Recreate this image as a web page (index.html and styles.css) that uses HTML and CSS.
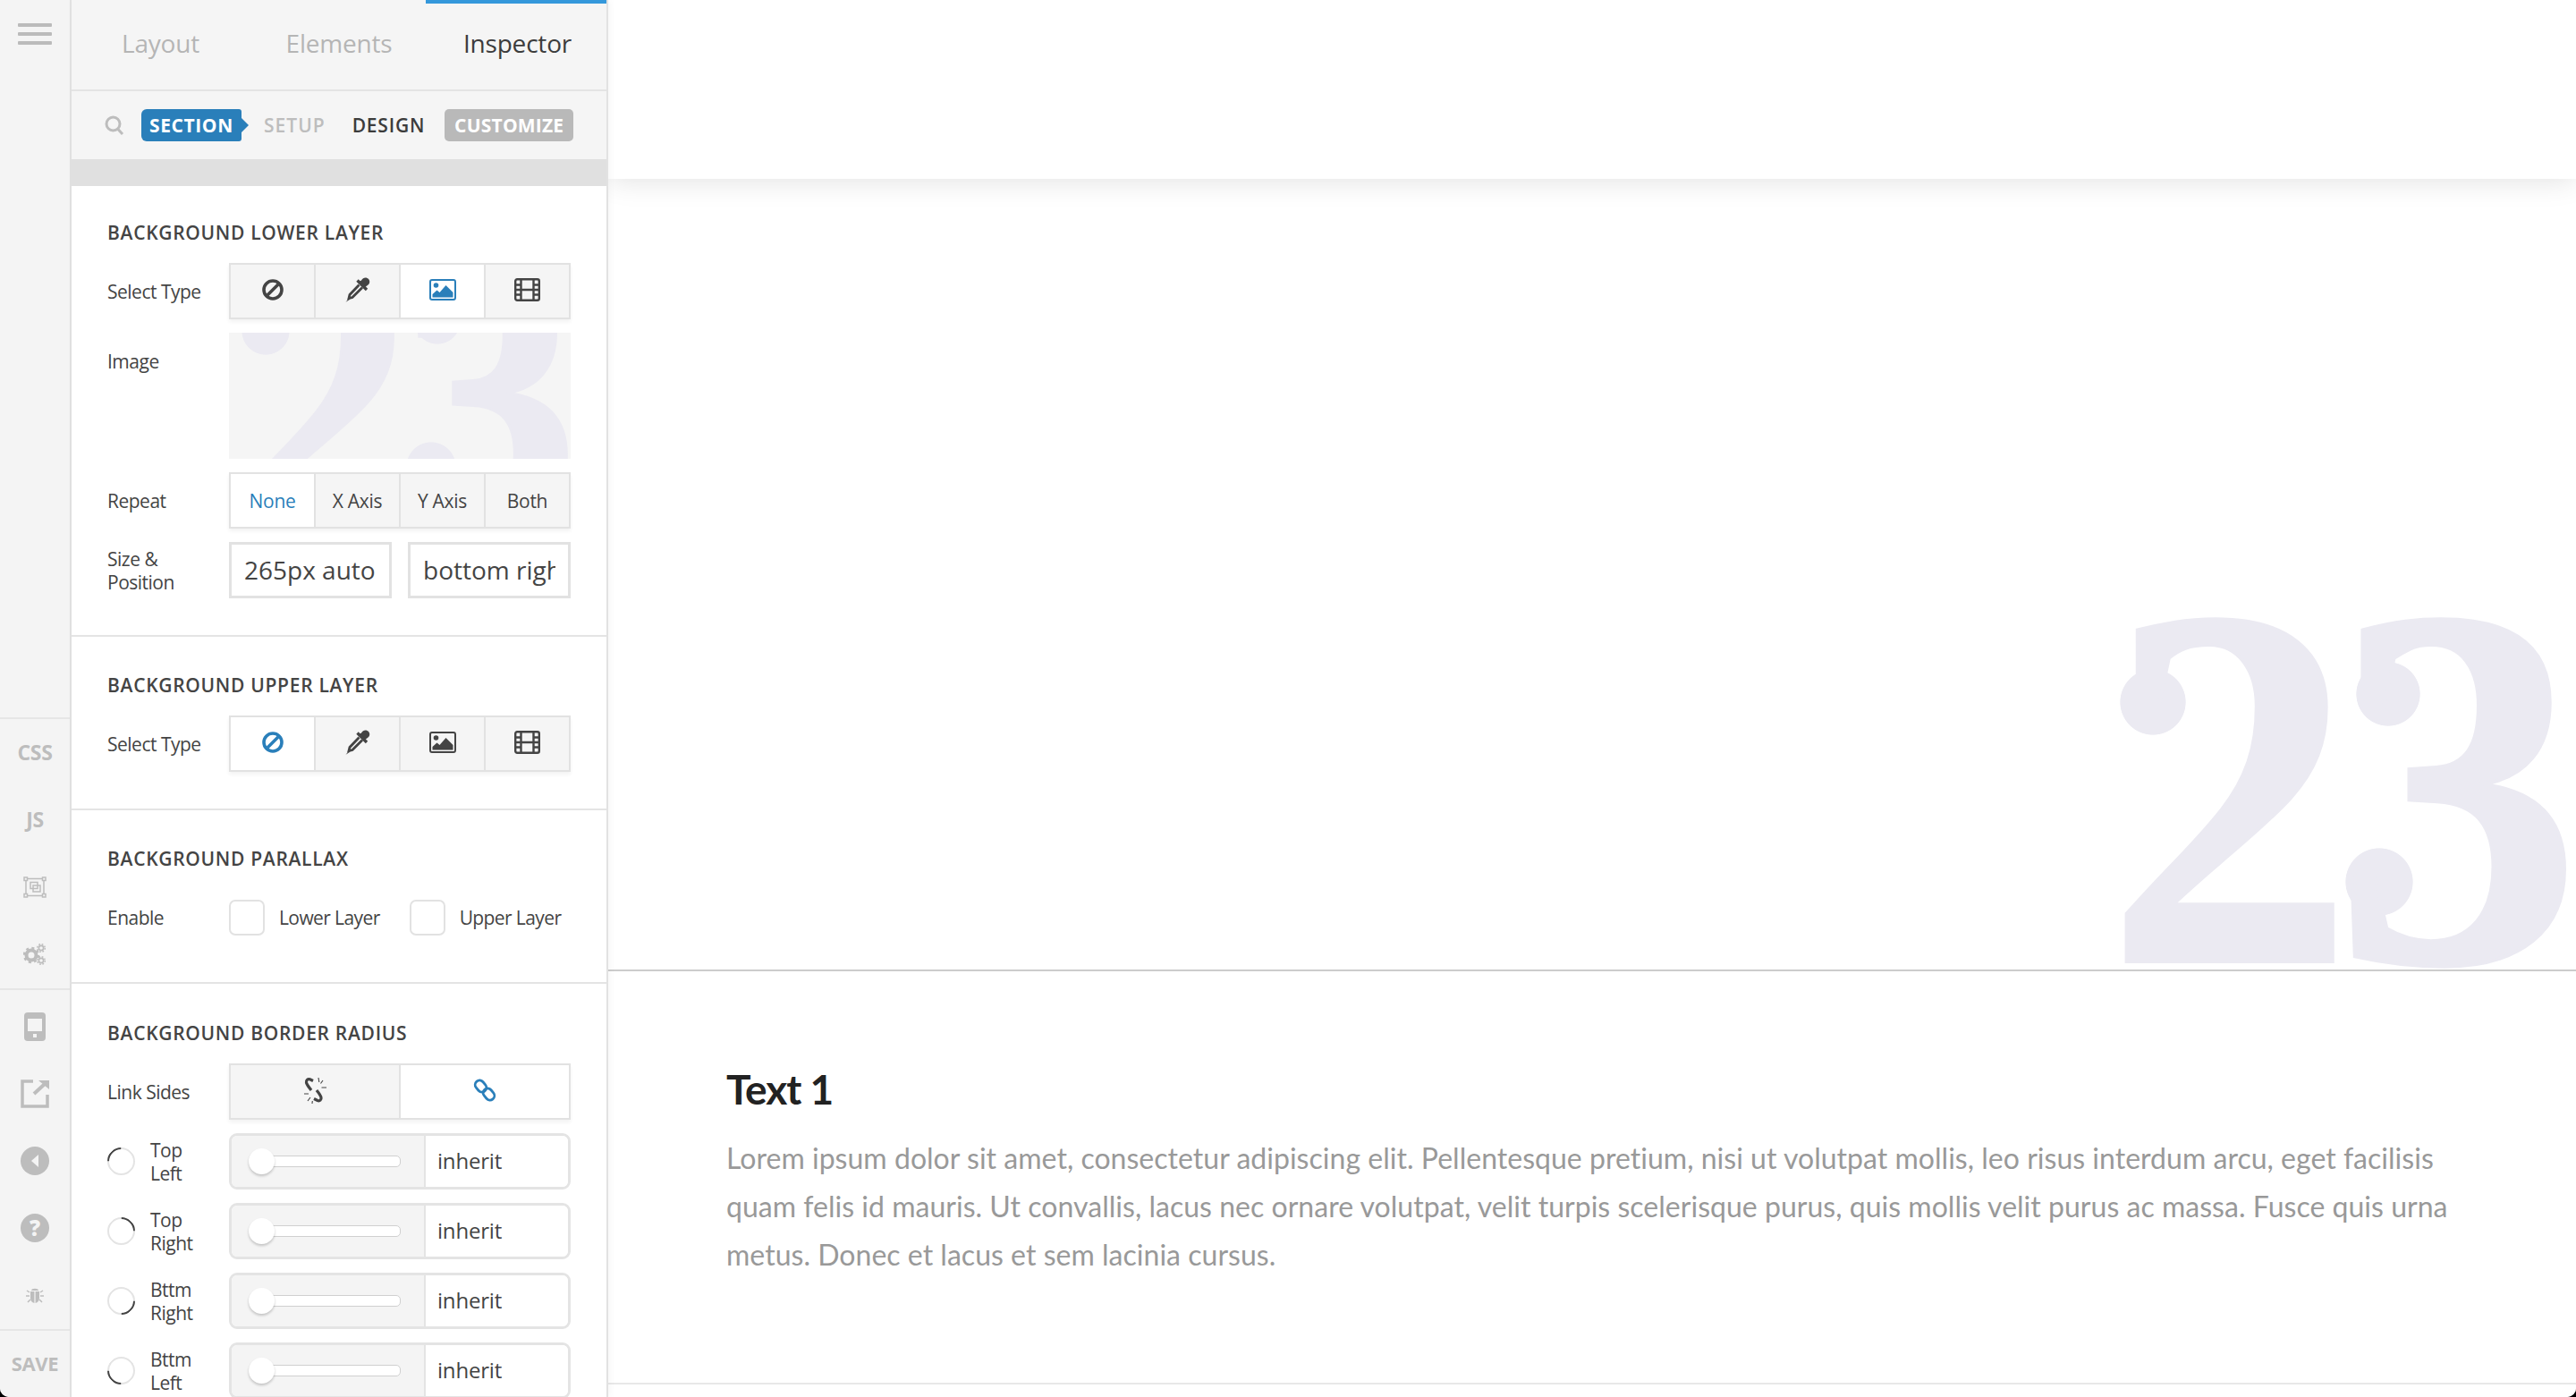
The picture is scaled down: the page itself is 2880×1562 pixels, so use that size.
FILE: index.html
```html
<!DOCTYPE html>
<html lang="en">
<head>
<meta charset="utf-8">
<title>Inspector</title>
<link rel="stylesheet" href="styles.css">
</head>
<body>
<svg class="defs" width="0" height="0" aria-hidden="true">
  <symbol id="i-ban" viewBox="0 0 24 24"><circle cx="12" cy="12" r="10" fill="none" stroke="currentColor" stroke-width="3.6"/><path d="M6 18 18 6" stroke="currentColor" stroke-width="3.6"/></symbol>
  <symbol id="i-drop" viewBox="0 0 28 28"><path d="M18 3.500c1.500-2.500 4-3.500 6.500-2.500 3 1.300 3.500 4.800 1.800 6.800-.8 1-1.800 1.700-2.800 2.200l-1.800 1.800-6.500-6.500z" fill="currentColor"/><path d="M13.500 3.500 24 14" stroke="currentColor" stroke-width="3.400"/><path d="M15.500 8.500 5 19.500l-1 4 4-1L19 11.500" fill="none" stroke="currentColor" stroke-width="2.800"/><path d="M4 23.500 .6 27.800l4.700-3z" fill="currentColor"/></symbol>
  <symbol id="i-img" viewBox="0 0 30 24"><rect x="1" y="1" width="28" height="22" rx="2" fill="none" stroke="currentColor" stroke-width="2"/><circle cx="7.500" cy="7" r="2.800" fill="currentColor"/><path d="M3.500 20.500V17l5-4.500 3 2.500 7-8 8 8v5.500z" fill="currentColor"/></symbol>
  <symbol id="i-film" viewBox="0 0 29 26"><rect x="1.200" y="1.200" width="26.600" height="23.600" rx="2" fill="none" stroke="currentColor" stroke-width="2.400"/><path d="M7.500 1v24M21.500 1v24M7.500 13h14M1 7.500h6.500M1 13h6.500M1 18.500h6.500M21.500 7.500H28M21.500 13H28M21.500 18.500H28" stroke="currentColor" stroke-width="2.400" fill="none"/></symbol>
</svg>

<div class="app">
  <nav class="rail">
    <div class="rail-top">
      <div class="burger"><i></i><i></i><i></i></div>
    </div>
    <div class="rail-group rail-langs">
      <div class="rail-item rail-text">CSS</div>
      <div class="rail-item rail-text">JS</div>
      <div class="rail-item">
        <svg width="26" height="24" viewBox="0 0 26 24" fill="none" stroke="#bdbdbd" stroke-width="1.500"><rect x="3" y="2.500" width="20" height="19"/><rect x="1" y="1" width="3.500" height="3.500" fill="#f4f4f4"/><rect x="21.500" y="1" width="3.500" height="3.500" fill="#f4f4f4"/><rect x="1" y="19.500" width="3.500" height="3.500" fill="#f4f4f4"/><rect x="21.500" y="19.500" width="3.500" height="3.500" fill="#f4f4f4"/><rect x="8" y="6.500" width="8" height="7"/><rect x="11" y="10" width="8" height="7"/></svg>
      </div>
      <div class="rail-item">
        <svg width="26" height="24" viewBox="0 0 26 24" fill="none" stroke="#bdbdbd"><circle cx="9" cy="13" r="5.500" stroke-width="4"/><circle cx="9" cy="13" r="8" stroke-width="2.500" stroke-dasharray="3 3.300"/><circle cx="20" cy="5" r="2.600" stroke-width="1.600"/><circle cx="20" cy="5" r="4.300" stroke-width="1.500" stroke-dasharray="1.800 1.600"/><circle cx="20" cy="19" r="2.600" stroke-width="1.600"/><circle cx="20" cy="19" r="4.300" stroke-width="1.500" stroke-dasharray="1.800 1.600"/></svg>
      </div>
    </div>
    <div class="rail-group rail-tools">
      <div class="rail-item">
        <svg width="24" height="32" viewBox="0 0 24 32"><rect width="24" height="32" rx="4" fill="#bdbdbd"/><rect x="4" y="7" width="16" height="14" fill="#f4f4f4"/><rect x="10" y="24" width="4" height="4" fill="#f4f4f4"/></svg>
      </div>
      <div class="rail-item">
        <svg width="32" height="32" viewBox="0 0 32 32" fill="none" stroke="#bdbdbd" stroke-width="3.500"><path d="M14 2H2v28h28V17"/><path d="M15 16 27 5" stroke-width="4"/><path d="M20 1h12v10z" fill="#bdbdbd" stroke="none"/></svg>
      </div>
      <div class="rail-item">
        <svg width="32" height="32" viewBox="0 0 32 32"><circle cx="16" cy="16" r="16" fill="#bdbdbd"/><path d="M20 9v14l-8-7z" fill="#f4f4f4"/></svg>
      </div>
      <div class="rail-item"><span class="help">?</span></div>
      <div class="rail-item">
        <svg width="20" height="20" viewBox="0 0 20 20" fill="#bdbdbd"><path d="M6 5c0-3 8-3 8 0z"/><path d="M5 6h4.400v13C6.500 18.500 5 16 5 13zM10.600 6H15v7c0 3-1.500 5.500-4.400 6z"/><path d="M4 7 1 5M16 7l3-2M4 11H0M16 11h4M5 15l-3 3M15 15l3 3" stroke="#bdbdbd" stroke-width="1.500"/></svg>
      </div>
    </div>
    <div class="rail-save">SAVE</div>
  </nav>

  <aside class="panel">
    <div class="tabs">
      <div class="tab">Layout</div>
      <div class="tab tab-mid">Elements</div>
      <div class="tab tab-active">Inspector</div>
    </div>
    <div class="subnav">
      <svg class="search" width="22" height="22" viewBox="0 0 22 22" fill="none" stroke="#bdbdbd" stroke-width="3"><circle cx="9.500" cy="9.500" r="7.500"/><path d="M14.500 15 20 21"/></svg>
      <span class="crumb crumb-section">SECTION</span>
      <span class="crumb crumb-setup">SETUP</span>
      <span class="crumb crumb-design">DESIGN</span>
      <span class="crumb crumb-custom">CUSTOMIZE</span>
    </div>
    <div class="band"></div>

    <section class="group group-first">
      <h3 class="group-title">BACKGROUND LOWER LAYER</h3>
      <div class="rows">
        <div class="row">
          <div class="label">Select Type</div>
          <div class="seg">
            <div class="cell"><svg class="ic-ban"><use href="#i-ban"/></svg></div>
            <div class="cell"><svg class="ic-drop"><use href="#i-drop"/></svg></div>
            <div class="cell cell-on"><svg class="ic-img"><use href="#i-img"/></svg></div>
            <div class="cell"><svg class="ic-film"><use href="#i-film"/></svg></div>
          </div>
        </div>
        <div class="row row-thumb">
          <div class="label label-top">Image</div>
          <div class="thumb"><span class="thumb-num">23</span></div>
        </div>
        <div class="row">
          <div class="label">Repeat</div>
          <div class="seg">
            <div class="cell cell-on">None</div>
            <div class="cell">X Axis</div>
            <div class="cell">Y Axis</div>
            <div class="cell">Both</div>
          </div>
        </div>
        <div class="row">
          <div class="label">Size &amp;<br>Position</div>
          <div class="fields">
            <div class="field"><span>265px auto</span></div>
            <div class="field"><span>bottom right</span></div>
          </div>
        </div>
      </div>
    </section>

    <section class="group">
      <h3 class="group-title">BACKGROUND UPPER LAYER</h3>
      <div class="rows">
        <div class="row">
          <div class="label">Select Type</div>
          <div class="seg">
            <div class="cell cell-on"><svg class="ic-ban"><use href="#i-ban"/></svg></div>
            <div class="cell"><svg class="ic-drop"><use href="#i-drop"/></svg></div>
            <div class="cell"><svg class="ic-img"><use href="#i-img"/></svg></div>
            <div class="cell"><svg class="ic-film"><use href="#i-film"/></svg></div>
          </div>
        </div>
      </div>
    </section>

    <section class="group">
      <h3 class="group-title">BACKGROUND PARALLAX</h3>
      <div class="rows">
        <div class="row">
          <div class="label">Enable</div>
          <div class="checks">
            <i class="check"></i><span class="check-label check-lower">Lower Layer</span>
            <i class="check"></i><span class="check-label">Upper Layer</span>
          </div>
        </div>
      </div>
    </section>

    <section class="group group-last">
      <h3 class="group-title">BACKGROUND BORDER RADIUS</h3>
      <div class="rows">
        <div class="row">
          <div class="label">Link Sides</div>
          <div class="seg">
            <div class="cell">
              <svg width="28" height="30" viewBox="0 0 28 30" fill="none" stroke="#444"><path d="M12 4.500 8.500 2.800C6 2 4 4 4.500 6.500c.5 2 3.500 6 5.500 8.500M16 15c2 2.500 4.500 5.500 5 8 .5 2.500-1.500 4.500-4 3.500l-4-2" stroke-width="3.200"/><path d="M18 1l.8 5M23 4l-2.500 3.500M27 12h-5.500M2 19h5M6 27l3-4M11 30l.3-3" stroke-width="1.100"/></svg>
            </div>
            <div class="cell cell-on">
              <svg width="26" height="26" viewBox="0 0 26 26" fill="none" stroke="currentColor" stroke-width="2.800"><rect x="1.500" y="3.500" width="14" height="10" rx="5" transform="rotate(50 8.500 8.500)"/><rect x="10.500" y="12.500" width="14" height="10" rx="5" transform="rotate(50 17.500 17.500)"/></svg>
            </div>
          </div>
        </div>
        <div class="row">
          <div class="label label-radio"><i class="radio radio-tl"></i><span>Top<br>Left</span></div>
          <div class="range"><div class="range-track"><i class="range-knob"></i></div><div class="range-value">inherit</div></div>
        </div>
        <div class="row">
          <div class="label label-radio"><i class="radio radio-tr"></i><span>Top<br>Right</span></div>
          <div class="range"><div class="range-track"><i class="range-knob"></i></div><div class="range-value">inherit</div></div>
        </div>
        <div class="row">
          <div class="label label-radio"><i class="radio radio-br"></i><span>Bttm<br>Right</span></div>
          <div class="range"><div class="range-track"><i class="range-knob"></i></div><div class="range-value">inherit</div></div>
        </div>
        <div class="row">
          <div class="label label-radio"><i class="radio radio-bl"></i><span>Bttm<br>Left</span></div>
          <div class="range"><div class="range-track"><i class="range-knob"></i></div><div class="range-value">inherit</div></div>
        </div>
      </div>
    </section>
  </aside>

  <main class="canvas">
    <div class="top-card"></div>
    <div class="hero"><span class="hero-num">23</span></div>
    <div class="copy">
      <h2 class="copy-title">Text 1</h2>
      <p class="copy-body">Lorem ipsum dolor sit amet, consectetur adipiscing elit. Pellentesque pretium, nisi ut volutpat mollis, leo risus interdum arcu, eget facilisis quam felis id mauris. Ut convallis, lacus nec ornare volutpat, velit turpis scelerisque purus, quis mollis velit purus ac massa. Fusce quis urna metus. Donec et lacus et sem lacinia cursus.</p>
    </div>
  </main>
</div>
</body>
</html>
```

FILE: styles.css
```css
* { box-sizing: border-box; }
html, body { margin: 0; height: 100%; overflow: hidden; background: #000; }
.defs { position: absolute; }
.app {
  display: flex; height: 1562px; width: 2880px; overflow: hidden;
  background: #fff; border-radius: 0 0 10px 10px;
  font-family: "Open Sans", sans-serif; color: #444;
}

/* rail */
.rail { width: 80px; flex: none; background: #f4f4f4; border-right: 2px solid #e2e2e2; display: flex; flex-direction: column; }
.rail-top { height: 802px; padding: 26px 0 0 20px; }
.burger { display: flex; flex-direction: column; gap: 6px; width: 38px; }
.burger i { display: block; height: 4px; background: #bbb; border-radius: 1px; }
.rail-group { border-top: 2px solid #e6e6e6; }
.rail-langs { padding-bottom: 1px; }
.rail-tools { padding-top: 3px; height: 381px; }
.rail-item { height: 75px; display: flex; align-items: center; justify-content: center; }
.rail-text { font-weight: 700; font-size: 23px; color: #bdbdbd; letter-spacing: -.3px; padding-bottom: 2px; }
.help { width: 32px; height: 32px; border-radius: 50%; background: #bdbdbd; color: #f4f4f4; font-weight: 800; font-size: 24px; line-height: 32px; text-align: center; }
.rail-save { border-top: 2px solid #e6e6e6; flex: 1; display: flex; align-items: center; justify-content: center; font-weight: 700; font-size: 22px; color: #bdbdbd; letter-spacing: -.3px; padding-bottom: 2px; }

/* panel */
.panel { width: 600px; flex: none; background: #fff; border-right: 2px solid #e2e2e2; box-shadow: 2px 0 8px rgba(0,0,0,.04); position: relative; z-index: 2; overflow: hidden; }
.tabs { display: grid; grid-template-columns: 199px 197px 202px; height: 102px; background: #f5f5f5; border-bottom: 2px solid #e4e4e4; }
.tab { display: flex; align-items: center; justify-content: center; font-size: 28px; color: #b5b5b5; letter-spacing: -.2px; padding-bottom: 4px; }
.tab-mid { padding-left: 3px; }
.tab-active { color: #3c3c3c; border-top: 4px solid #3498db; padding: 0 0 8px 3px; }
.subnav { display: flex; align-items: center; height: 76px; background: #f5f5f5; padding-left: 37px; font-size: 21px; font-weight: 600; letter-spacing: 1px; }
.search { flex: none; }
.crumb { white-space: nowrap; }
.crumb-section { position: relative; margin-left: 19px; width: 112px; height: 36px; line-height: 36px; background: #2a7fba; color: #fff; border-radius: 6px 3px 3px 6px; padding-left: 9px; font-weight: 700; letter-spacing: .6px; }
.crumb-section::after { content: ""; position: absolute; left: 100%; top: 10px; border-left: 8px solid #2a7fba; border-top: 8px solid transparent; border-bottom: 8px solid transparent; }
.crumb-setup { margin-left: 25px; color: #bdbdbd; }
.crumb-design { margin-left: 30px; color: #3c3c3c; letter-spacing: .8px; }
.crumb-custom { margin-left: 22px; width: 144px; text-align: center; height: 36px; line-height: 36px; background: #b9b9b9; color: #fff; border-radius: 5px; font-weight: 700; letter-spacing: .2px; }
.band { height: 30px; background: #e0e0e0; }

.group { padding: 42px 42px 41px 40px; border-bottom: 2px solid #e4e4e4; }
.group-first { padding-top: 40px; }
.group-last { padding-top: 43px; }
.group-title { margin: 0 0 22px; font-size: 21px; line-height: 24px; font-weight: 600; color: #444; letter-spacing: .7px; }
.rows { display: flex; flex-direction: column; gap: 15px; }
.row { display: grid; grid-template-columns: 136px 382px; align-items: center; min-height: 63px; }
.row-thumb { align-items: start; }
.label { font-size: 21px; line-height: 26px; color: #444; letter-spacing: -.5px; }
.label-top { padding-top: 19px; }
.label-radio { display: flex; align-items: center; gap: 17px; }

.seg { display: flex; height: 63px; border: 2px solid #e2e2e2; background: #f5f5f5; box-shadow: 0 3px 4px rgba(0,0,0,.05); }
.cell { flex: 1; display: flex; align-items: center; justify-content: center; border-right: 2px solid #e2e2e2; color: #444; font-size: 21px; letter-spacing: -.3px; }
.cell svg { margin-bottom: 3px; }
.cell:last-child { border-right: 0; }
.cell-on { background: #fff; color: #2a7fba; }
.ic-ban { width: 24px; height: 24px; }
.ic-drop { width: 28px; height: 28px; }
.ic-img { width: 30px; height: 24px; }
.ic-film { width: 29px; height: 26px; }

.thumb {
  position: relative; height: 141px; overflow: hidden;
  background:
    radial-gradient(circle 27px at 41px -2px, #ebeaf2 97%, transparent),
    radial-gradient(circle 26px at 233px -13px, #ebeaf2 97%, transparent),
    radial-gradient(circle 28px at 226px 150px, #ebeaf2 97%, transparent),
    #f5f5f5;
}
.thumb-num { position: absolute; right: 8px; top: -141px; font: 700 422px/1 "Liberation Serif", serif; color: #ebeaf2; -webkit-text-stroke: 3px #ebeaf2; letter-spacing: -18px; white-space: nowrap; transform: scaleX(.96); transform-origin: 100% 50%; }

.fields { display: grid; grid-template-columns: 182px 182px; gap: 18px; }
.field { height: 63px; border: 3px solid #e2e2e2; padding: 0 14px 2px; display: flex; align-items: center; font-size: 28px; color: #444; background: #fff; }
.field span { display: block; overflow: hidden; white-space: nowrap; width: 100%; }

.checks { display: flex; align-items: center; }
.check { width: 40px; height: 40px; flex: none; border: 2px solid #e2e2e2; border-radius: 7px; background: #fff; }
.check-label { margin-left: 16px; font-size: 21px; letter-spacing: -.6px; white-space: nowrap; }
.check-lower { margin-right: 33px; }

.radio { width: 31px; height: 31px; flex: none; display: block; border: 2px solid #e4e4e4; border-radius: 50%; }
.radio-tl { border-top-color: #444; transform: rotate(-45deg); }
.radio-tr { border-top-color: #444; transform: rotate(45deg); }
.radio-br { border-top-color: #444; transform: rotate(135deg); }
.radio-bl { border-top-color: #444; transform: rotate(225deg); }

.range { display: flex; height: 63px; border: 3px solid #e4e4e4; border-radius: 9px; overflow: hidden; }
.range-track { width: 217px; flex: none; background: #f4f4f4; border-right: 2px solid #e4e4e4; position: relative; padding: 0; display: flex; align-items: center; }
.range-track::before { content: ""; display: block; margin-left: 30px; width: 157px; height: 11px; background: #fff; border: 1px solid #d0d0d0; border-radius: 5px; }
.range-knob { position: absolute; left: 19px; top: 14px; width: 29px; height: 29px; background: #fff; border-radius: 50%; box-shadow: 0 2px 3px rgba(0,0,0,.2); }
.range-value { flex: 1; background: #fff; padding: 0 0 3px 13px; display: flex; align-items: center; font-size: 24px; letter-spacing: -.2px; color: #444; }

/* canvas */
.canvas { flex: 1; min-width: 0; background: #fff; display: flex; flex-direction: column; }
.top-card { height: 200px; background: #fff; box-shadow: 0 2px 30px rgba(0,0,0,.12); position: relative; z-index: 1; }
.hero {
  height: 886px; border-bottom: 2px solid #ccc; position: relative; overflow: hidden;
  background:
    radial-gradient(circle 37px at 1727px 585px, #ebeaf2 98%, transparent),
    radial-gradient(circle 36px at 1990px 576px, #ebeaf2 98%, transparent),
    radial-gradient(circle 38px at 1980px 786px, #ebeaf2 98%, transparent);
}
.hero-num { position: absolute; right: 17px; bottom: -85px; font: 700 578px/1 "Liberation Serif", serif; color: #ebeaf2; -webkit-text-stroke: 4px #ebeaf2; letter-spacing: -24px; white-space: nowrap; transform: scaleX(.96); transform-origin: 100% 50%; }
.copy { padding: 102px 100px 0 132px; height: 462px; border-bottom: 2px solid #e8e8e8; }
.copy-title { margin: 0 0 20px; font: 700 46px/60px "Lato", sans-serif; color: #222; letter-spacing: -1px; }
.copy-body { margin: 0; font: 400 32px/54px "Lato", sans-serif; color: #999; letter-spacing: .025px; }
```
